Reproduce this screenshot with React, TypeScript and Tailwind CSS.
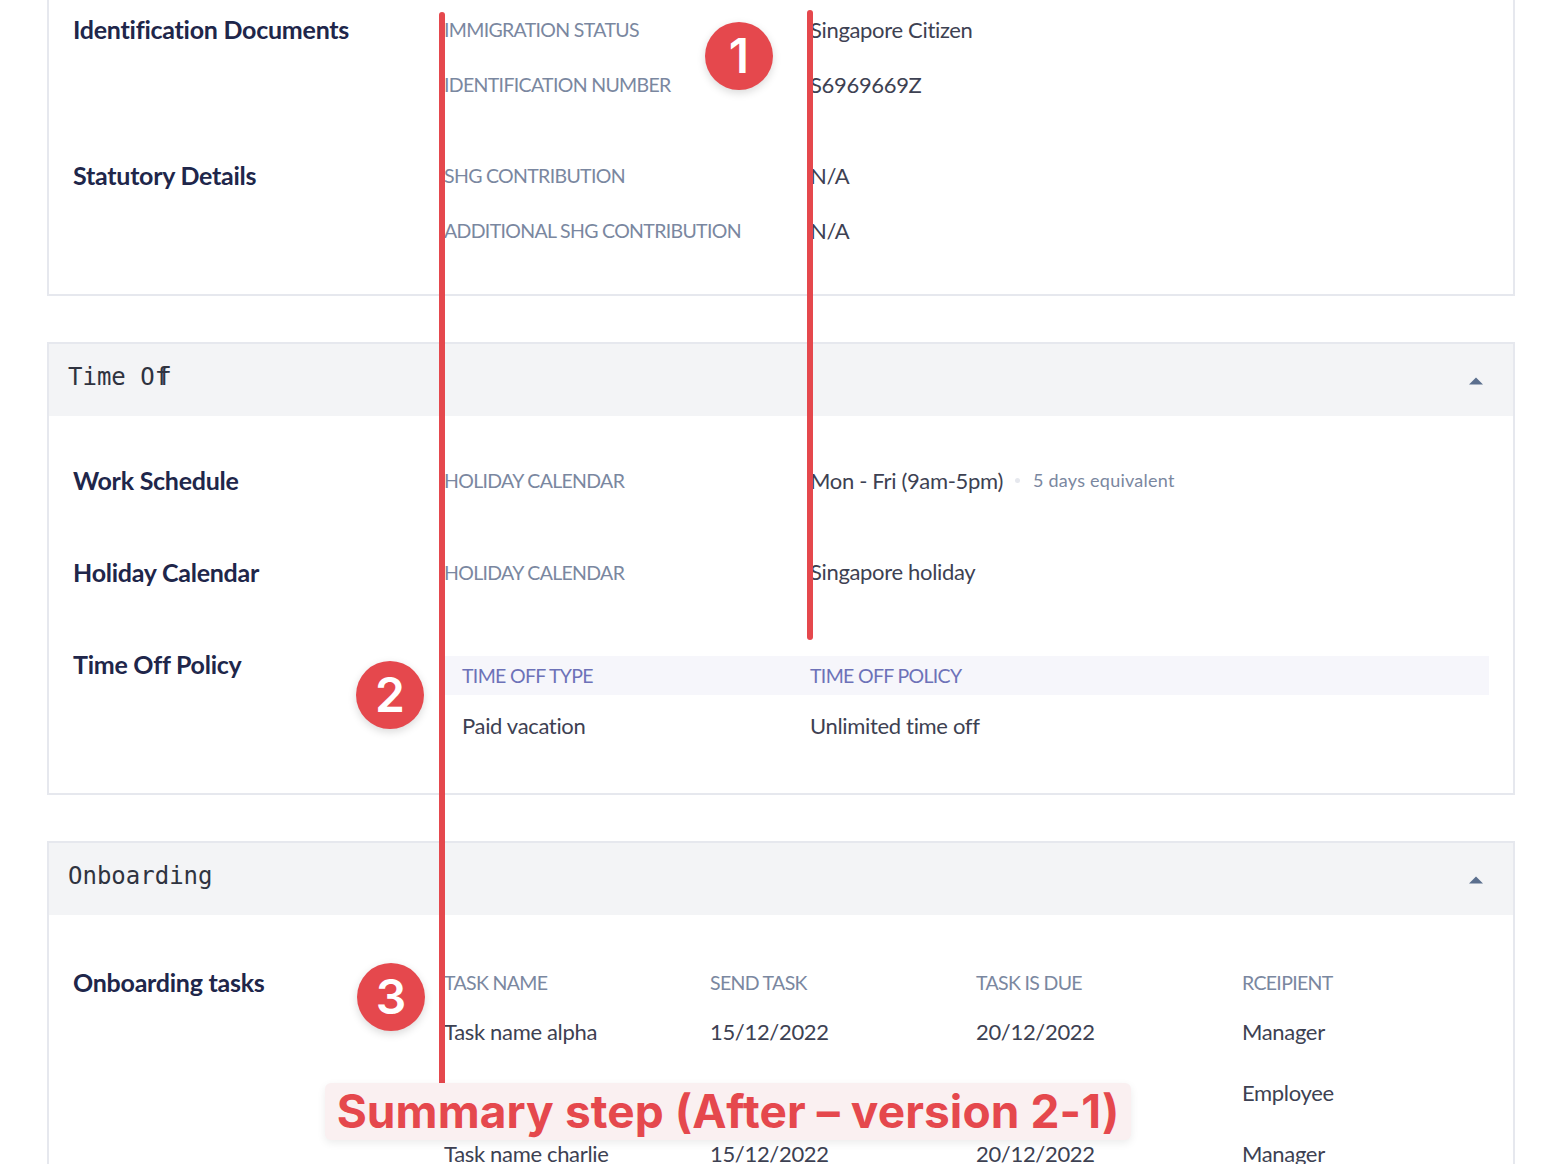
const lato = "font-['Lato','Noto_Sans',sans-serif]";
const labelText = "text-[19.5px] tracking-[-0.67px] text-[#7a87a0]";
const valueText = "text-[22px] tracking-[-0.33px] text-[#3d4152]";
const headingText = "text-[25px] font-bold tracking-[-0.25px] text-[#20264a]";

function Caret() {
  return (
    <svg width="14" height="8" viewBox="0 0 14 8" className="mt-0.5">
      <path d="M7 0.5 L14 7.5 L0 7.5 Z" fill="#5b6f8e" />
    </svg>
  );
}

function CardHeader({ title }: { title: React.ReactNode }) {
  return (
    <div className="flex h-[72px] items-center justify-between bg-[#f3f4f6] pr-[30px] pl-[19px]">
      <span className="-mt-1.5 font-['DejaVu_Sans_Mono',monospace] text-2xl leading-none text-[#2f3340]">{title}</span>
      <Caret />
    </div>
  );
}

function Row({
  title,
  label,
  value,
  height,
  valueClass = "",
}: {
  title?: string;
  label: string;
  value: React.ReactNode;
  height: string;
  valueClass?: string;
}) {
  return (
    <div className={`grid grid-cols-[371px_366px_1fr] items-center ${height}`}>
      <div className={headingText}>{title}</div>
      <div className={labelText}>{label}</div>
      <div className={`${valueText} ${valueClass}`}>{value}</div>
    </div>
  );
}

const tasks = [
  { name: "Task name alpha", send: "15/12/2022", due: "20/12/2022", to: "Manager" },
  { name: "", send: "", due: "", to: "Employee" },
  { name: "Task name charlie", send: "15/12/2022", due: "20/12/2022", to: "Manager" },
];

export default function App() {
  return (
    <div className={`relative h-[1164px] w-[1562px] overflow-hidden bg-white px-[47px] ${lato}`}>
      <section className="h-[296px] border-x-2 border-b-2 border-[#e6e8ee] pt-0.5 pl-6">
        <Row title="Identification Documents" label="IMMIGRATION STATUS" value="Singapore Citizen" height="h-[55px]" />
        <Row label="IDENTIFICATION NUMBER" value="S6969669Z" height="h-[55px]" />
        <div className="h-9" />
        <Row title="Statutory Details" label="SHG CONTRIBUTION" value="N/A" height="h-[55px]" />
        <Row label="ADDITIONAL SHG CONTRIBUTION" value="N/A" height="h-[55px]" />
      </section>

      <section className="mt-[46px] h-[453px] border-x-2 border-y-2 border-[#e6e8ee]">
        <CardHeader
          title={
            <>
              Time O<span className="tracking-[-12px]">f</span>f
            </>
          }
        />
        <div className="pt-[19px] pr-6 pl-6">
          <Row
            title="Work Schedule"
            label="HOLIDAY CALENDAR"
            height="h-[92px]"
            valueClass="-mt-0.5"
            value={
              <span className="flex items-center">
                Mon - Fri (9am-5pm)
                <span className="mr-[13px] ml-3 size-[5px] rounded-full bg-[#e6e8ee]" />
                <span className="text-lg tracking-[0.25px] text-[#7a87a0]">5 days equivalent</span>
              </span>
            }
          />
          <Row
            title="Holiday Calendar"
            label="HOLIDAY CALENDAR"
            value="Singapore holiday"
            height="h-[92px]"
            valueClass="-mt-1"
          />
          <div className="grid grid-cols-[371px_1fr] pt-[37px]">
            <div className={`-mt-2.5 ${headingText}`}>Time Off Policy</div>
            <div>
              <div className="grid h-[39px] grid-cols-[348px_1fr] items-center bg-[#f6f6fb] pl-[18px] text-[19.5px] tracking-[-0.67px] text-[#6d72b8]">
                <span>TIME OFF TYPE</span>
                <span>TIME OFF POLICY</span>
              </div>
              <div className={`grid h-[60px] grid-cols-[348px_1fr] items-center pl-[18px] ${valueText}`}>
                <span>Paid vacation</span>
                <span>Unlimited time off</span>
              </div>
            </div>
          </div>
        </div>
      </section>

      <section className="mt-[46px] h-[400px] border-x-2 border-t-2 border-[#e6e8ee]">
        <CardHeader title="Onboarding" />
        <div className="grid grid-cols-[371px_1fr] pt-[50px] pl-6">
          <div className={`leading-[34px] ${headingText}`}>Onboarding tasks</div>
          <div>
            <div className={`grid h-9 grid-cols-[266px_266px_266px_1fr] items-center ${labelText}`}>
              <span>TASK NAME</span>
              <span>SEND TASK</span>
              <span>TASK IS DUE</span>
              <span>RCEIPIENT</span>
            </div>
            <div className={valueText}>
              {tasks.map((t) => (
                <div key={t.to + t.name} className="grid h-[61px] grid-cols-[266px_266px_266px_1fr] items-center">
                  <span>{t.name}</span>
                  <span>{t.send}</span>
                  <span>{t.due}</span>
                  <span>{t.to}</span>
                </div>
              ))}
            </div>
          </div>
        </div>
      </section>

      {/* annotation layer */}
      <div className="absolute top-3 left-[439px] h-[1075px] w-[6px] rounded-full bg-[#e5484d]" />
      <div className="absolute top-[10px] left-[807px] h-[630px] w-[6px] rounded-full bg-[#e5484d]" />
      {[
        { n: 1, pos: "top-[22px] left-[705px]" },
        { n: 2, pos: "top-[661px] left-[356px]" },
        { n: 3, pos: "top-[963px] left-[357px]" },
      ].map((b) => (
        <div
          key={b.n}
          className={`absolute flex size-[68px] items-center justify-center rounded-full bg-[#e5484d] font-['Inter',sans-serif] text-[48px] font-semibold text-white shadow-[0_3px_8px_rgba(0,0,0,0.15)] ${b.pos}`}
        >
          {b.n}
        </div>
      ))}
      <div className="absolute top-[1083px] left-[325px] flex h-[57px] w-[806px] items-center justify-center rounded-md bg-[#faf0f1] font-['Inter',sans-serif] text-[46px] font-bold tracking-[0.1px] whitespace-nowrap text-[#e5484d] shadow-[0_3px_8px_rgba(0,0,0,0.08)]">
        Summary step (After – version 2-1)
      </div>
    </div>
  );
}
